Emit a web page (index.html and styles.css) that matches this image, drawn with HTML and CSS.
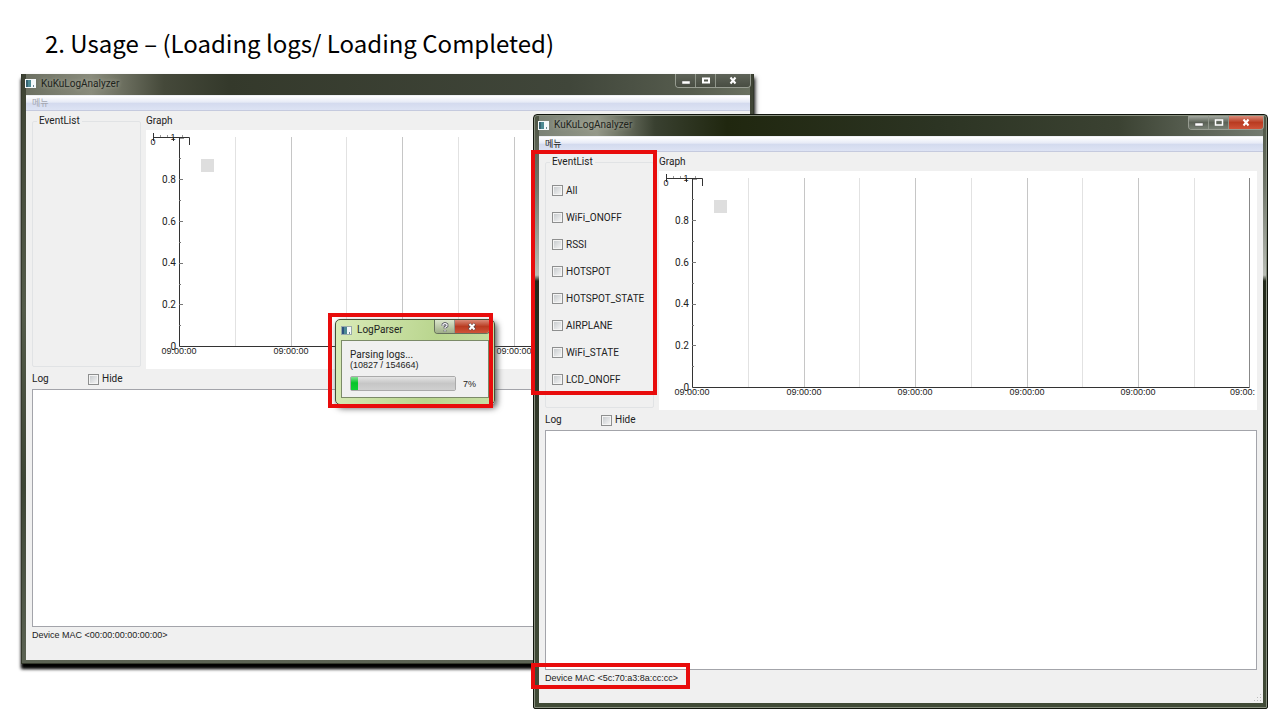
FILE: index.html
```html
<!DOCTYPE html>
<html lang="en">
<head>
<meta charset="utf-8">
<title>KuKuLogAnalyzer usage</title>
<link rel="stylesheet" href="styles.css">
</head>
<body>
<main class="slide">
  <h1 class="slide-title">2. Usage – (Loading logs/ Loading Completed)</h1>

  <section class="window window-loading">
    <header class="titlebar">
      <svg class="app-icon" width="11" height="9" viewBox="0 0 11 9"><rect width="11" height="9" fill="#f4f8fa"/><rect x="1" y="1" width="5" height="7" fill="#4d8a93"/><rect x="1" y="1" width="2" height="7" fill="#376474"/><rect x="8" y="6" width="1" height="2" fill="#6d8794"/></svg>
      <span class="caption">KuKuLogAnalyzer</span>
      <div class="controls">
        <button class="control" aria-label="Minimize"><svg width="10" height="9"><rect x="1" y="5" width="8" height="3" fill="#fff" stroke="#555" stroke-width=".5"/></svg></button>
        <button class="control" aria-label="Maximize"><svg width="10" height="9"><rect x="2" y="2.5" width="6" height="4" fill="none" stroke="#fff" stroke-width="2"/></svg></button>
        <button class="control control-close" aria-label="Close"><svg width="10" height="9"><path d="M2.500 1.500L7.500 7.500M7.500 1.500L2.500 7.500" stroke="#fff" stroke-width="2"/></svg></button>
      </div>
    </header>
    <div class="client">
      <nav class="menubar"><button class="menu" disabled>메뉴</button></nav>
      <div class="panels">
        <fieldset class="events"><legend>EventList</legend></fieldset>
        <section class="graph">
          <h2 class="label">Graph</h2>
          <svg class="plot" width="100%" height="239">
            <path d="M89.500 7V217M200.500 7V217M312.500 7V217M423.500 7V217M535.500 7V217" stroke="#e2e2e2"/>
            <path d="M145.500 7V217M256.500 7V217M368.500 7V217M479.500 7V217" stroke="#c6c6c6"/>
            <path d="M590.500 7V217" stroke="#888"/>
            <rect x="55" y="29" width="13" height="13" fill="#dedede"/>
            <path d="M33.500 7V216.500H590" fill="none" stroke="#333"/>
            <path d="M33 49.500h4M33 91.500h4M33 133.500h4M33 174.500h4M33 28.500h2M33 70.500h2M33 112.500h2M33 154.500h2M33 195.500h2" stroke="#777"/>
            <path d="M7 7.500H43.500V15M7.500 3V11M33 8h5M27.500 7v4" fill="none" stroke="#333"/>
            <path d="M14.500 5v2M21.500 5v2M36.500 5v2" stroke="#999"/>
            <g class="ticks"><text x="7" y="15">0</text><text x="27" y="10">1</text></g>
            <g class="values"><text x="30" y="53">0.8</text><text x="30" y="95">0.6</text><text x="30" y="136">0.4</text><text x="30" y="178">0.2</text><text x="30" y="220">0</text></g>
            <g class="ticks"><text x="33" y="224">09:00:00</text><text x="145" y="224">09:00:00</text><text x="256" y="224">09:00:00</text><text x="368" y="224">09:00:00</text><text x="479" y="224">09:00:00</text></g>
            <text class="last-tick" x="571" y="224">09:00:</text>
          </svg>
        </section>
      </div>
      <div class="log-head"><label class="log-label" for="log-a">Log</label><label class="check"><input type="checkbox">Hide</label></div>
      <textarea class="log" id="log-a" readonly></textarea>
      <p class="device">Device MAC &lt;00:00:00:00:00:00&gt;</p>
    </div>
  </section>

  <section class="dialog">
    <header class="titlebar dialog-title">
      <svg class="app-icon" width="11" height="9" viewBox="0 0 11 9"><rect x=".5" y=".5" width="10" height="8" fill="#f4f8fa" stroke="#9aa"/><rect x="1" y="1" width="5" height="7" fill="#4d8a93"/><rect x="1" y="1" width="2" height="7" fill="#2c5280"/><rect x="8" y="6" width="1" height="2" fill="#6d8794"/></svg>
      <span class="caption">LogParser</span>
      <div class="controls">
        <button class="control control-help" aria-label="Help"><svg width="10" height="10"><path d="M3 4V2.500Q5 .8 7 2.500V4L5 5.500V6.500M5 8v1.500" fill="none" stroke="#445" stroke-width="2.600"/><path d="M3 4V2.500Q5 .8 7 2.500V4L5 5.500V6.500M5 8v1.500" fill="none" stroke="#fff" stroke-width="1.200"/></svg></button>
        <button class="control control-close" aria-label="Close"><svg width="10" height="9"><path d="M2 2L8 7.500M8 2L2 7.500" stroke="#644" stroke-width="3.500"/><path d="M2.500 2L7.500 7.500M7.500 2L2.500 7.500" stroke="#fff" stroke-width="2"/></svg></button>
      </div>
    </header>
    <div class="dialog-body">
      <label for="progress">Parsing logs...<br><span class="count">(10827 / 154664)</span></label>
      <div class="progress-row"><progress id="progress" value="7" max="100"></progress><span class="count">7%</span></div>
    </div>
  </section>
  <div class="mark mark-dialog"></div>

  <section class="window window-done">
    <header class="titlebar">
      <svg class="app-icon" width="11" height="9" viewBox="0 0 11 9"><rect width="11" height="9" fill="#f4f8fa"/><rect x="1" y="1" width="5" height="7" fill="#4d8a93"/><rect x="1" y="1" width="2" height="7" fill="#376474"/><rect x="8" y="6" width="1" height="2" fill="#6d8794"/></svg>
      <span class="caption">KuKuLogAnalyzer</span>
      <div class="controls">
        <button class="control" aria-label="Minimize"><svg width="10" height="9"><rect x="1" y="5" width="8" height="3" fill="#fff" stroke="#555" stroke-width=".5"/></svg></button>
        <button class="control" aria-label="Maximize"><svg width="10" height="9"><rect x="1.500" y="2" width="7" height="5" fill="none" stroke="#fff" stroke-width="1.500"/></svg></button>
        <button class="control control-close" aria-label="Close"><svg width="10" height="9"><path d="M2.500 1.500L7.500 7.500M7.500 1.500L2.500 7.500" stroke="#fff" stroke-width="2"/></svg></button>
      </div>
    </header>
    <div class="client">
      <nav class="menubar"><button class="menu">메뉴</button></nav>
      <div class="panels">
        <fieldset class="events">
          <legend>EventList</legend>
          <label class="check"><input type="checkbox">All</label>
          <label class="check"><input type="checkbox">WiFi_ONOFF</label>
          <label class="check"><input type="checkbox">RSSI</label>
          <label class="check"><input type="checkbox">HOTSPOT</label>
          <label class="check"><input type="checkbox">HOTSPOT_STATE</label>
          <label class="check"><input type="checkbox">AIRPLANE</label>
          <label class="check"><input type="checkbox">WiFi_STATE</label>
          <label class="check"><input type="checkbox">LCD_ONOFF</label>
        </fieldset>
        <section class="graph">
          <h2 class="label">Graph</h2>
          <svg class="plot" width="100%" height="239">
            <path d="M89.500 7V217M200.500 7V217M312.500 7V217M423.500 7V217M535.500 7V217" stroke="#e2e2e2"/>
            <path d="M145.500 7V217M256.500 7V217M368.500 7V217M479.500 7V217" stroke="#c6c6c6"/>
            <path d="M590.500 7V217" stroke="#888"/>
            <rect x="55" y="29" width="13" height="13" fill="#dedede"/>
            <path d="M33.500 7V216.500H590" fill="none" stroke="#333"/>
            <path d="M33 49.500h4M33 91.500h4M33 133.500h4M33 174.500h4M33 28.500h2M33 70.500h2M33 112.500h2M33 154.500h2M33 195.500h2" stroke="#777"/>
            <path d="M7 7.500H43.500V15M7.500 3V11M33 8h5M27.500 7v4" fill="none" stroke="#333"/>
            <path d="M14.500 5v2M21.500 5v2M36.500 5v2" stroke="#999"/>
            <g class="ticks"><text x="7" y="15">0</text><text x="27" y="10">1</text></g>
            <g class="values"><text x="30" y="53">0.8</text><text x="30" y="95">0.6</text><text x="30" y="136">0.4</text><text x="30" y="178">0.2</text><text x="30" y="220">0</text></g>
            <g class="ticks"><text x="33" y="224">09:00:00</text><text x="145" y="224">09:00:00</text><text x="256" y="224">09:00:00</text><text x="368" y="224">09:00:00</text><text x="479" y="224">09:00:00</text></g>
            <text class="last-tick" x="571" y="224">09:00:</text>
          </svg>
        </section>
      </div>
      <div class="log-head"><label class="log-label" for="log-b">Log</label><label class="check"><input type="checkbox">Hide</label></div>
      <textarea class="log" id="log-b" readonly></textarea>
      <p class="device">Device MAC &lt;5c:70:a3:8a:cc:cc&gt;</p>
      <svg class="grip" width="8" height="8" fill="#bbb"><path d="M6 0h1v1H6zM6 3h1v1H6zM6 6h1v1H6zM3 3h1v1H3zM3 6h1v1H3zM0 6h1v1H0z"/></svg>
    </div>
  </section>
  <div class="mark mark-events"></div>
  <div class="mark mark-mac"></div>
</main>
</body>
</html>
```
FILE: styles.css
```css
* { box-sizing: border-box; }
body {
  margin: 0;
  background: #fff;
  color: #222;
  font: 10px/12px Roboto, "Liberation Sans", "Noto Sans CJK KR", sans-serif;
}
.slide { position: relative; min-height: 100vh; overflow: hidden; }
.slide-title {
  margin: 0;
  padding: 26px 45px 0;
  color: #000;
  font: 400 24px/34px "Noto Sans CJK KR", "Noto Sans", sans-serif;
}

.window {
  position: absolute;
  display: flex;
  flex-direction: column;
  border: 1px solid #33382b;
  color: #222;
}
.window-loading {
  left: 21px;
  top: 74px;
  width: 733px;
  height: 590px;
  padding: 0 3px 3px 4px;
  border-top: 0;
  background: linear-gradient(#3d4233, #545b4a 40%, #3d4535 70%, #5b6253);
  box-shadow: 0 5px 3px #000, 2px 3px 4px #777;
}
.window-done {
  left: 533px;
  top: 114px;
  width: 735px;
  height: 595px;
  padding: 0 4px 5px 5px;
  border-color: #10140c;
  border-radius: 4px 4px 2px 2px;
  background: linear-gradient(#4c5342, #70766a 12%, #b9bdb5 27%, #22291a 28%, #384030 60%, #414b37);
  box-shadow: inset 0 0 0 1px #899080;
}
.titlebar {
  display: flex;
  flex: none;
  align-items: center;
  gap: 5px;
  height: 20px;
}
.window .titlebar { padding-bottom: 2px; background: linear-gradient(90deg, #6c7062, #8a8c7c 9%, #45493a 19%, #34392b 28%, #40463a 75%, #565c4e 92%, #697060); }
.window-loading .titlebar { height: 21px; }
.window-done .titlebar { margin-top: 1px; height: 20px; background: linear-gradient(90deg, #7a8175, #949889 8%, #394030 16%, #20270f 26%, #2c3423 55%, #3b4232 80%, #747b70); }
.caption { color: #20231c; white-space: nowrap; }
.window .caption { text-shadow: 0 0 4px #b5b8a8; }
.app-icon { margin-left: -1px; }
.controls {
  display: flex;
  align-self: flex-start;
  margin: 0 -1px 0 auto;
  border: 1px solid #979c91;
  border-top: 0;
  border-radius: 0 0 4px 4px;
  overflow: hidden;
}
.control {
  display: grid;
  place-items: center;
  width: 20px;
  height: 13px;
  padding: 0;
  border: 0;
  border-right: 1px solid #8f958a;
  background: linear-gradient(#5f6459, #484d42);
}
.control-close { width: 34px; border-right: 0; }
.window-done .control { background: linear-gradient(#a3a8a0, #5c6357 50%, #777f73); }
.window-done .control-close, .dialog .control-close { background: linear-gradient(#d98a78, #b93b21 50%, #cf5339); }

.client {
  position: relative;
  display: flex;
  flex: 1;
  flex-direction: column;
  min-height: 0;
  border-top: 1px solid #eef0f4;
  background: #f0f0f0;
}
.menubar {
  flex: none;
  height: 15px;
  border-bottom: 1px solid #c5cade;
  background: linear-gradient(#fff, #e6eaf6 45%, #d3daee 50%, #dde3f4);
}
.menu {
  display: block;
  padding: 0 6px;
  border: 0;
  background: none;
  color: #222;
  font: 9px/14px "Noto Sans CJK KR", sans-serif;
}
.menu:disabled { color: #a3a6b0; }
.panels { display: flex; gap: 5px; padding: 4px 6px 0; }
.events {
  display: flex;
  flex-direction: column;
  width: 109px;
  margin: 0 0 2px;
  padding: 9px 0 0 6px;
  border: 1px solid #e1e3e5;
  border-radius: 2px;
}
.events legend { margin-left: -2px; padding: 0 2px; }
.events .check { height: 27px; }
.graph { flex: 1; min-width: 0; }
.label { margin: 0 0 3px; font: inherit; }
.plot { display: block; background: #fff; }
.plot text { fill: #222; }
.ticks, .last-tick, .count, .device { font-size: 9px; font-family: "Liberation Sans", sans-serif; }
.ticks { text-anchor: middle; }
.values { text-anchor: end; }
.check { display: flex; align-items: center; gap: 3px; white-space: nowrap; }
.check input {
  appearance: none;
  flex: none;
  width: 11px;
  height: 11px;
  margin: 0;
  border: 1px solid #8e8f8f;
  background: linear-gradient(135deg, #c3c7ca, #f8f8f8);
  box-shadow: inset 0 0 0 1px #f4f4f4;
}
.log-head { display: flex; flex: none; align-items: center; height: 20px; padding: 0 6px; }
.log-label { width: 56px; }
.log {
  flex: 1;
  min-height: 0;
  margin: 0 6px;
  border: 1px solid #a3a4aa;
  background: #fff;
  resize: none;
}
.device { flex: none; height: 33px; margin: 0; padding: 2px 6px; }
.grip { position: absolute; right: 1px; bottom: 1px; }

.dialog {
  position: absolute;
  left: 335px;
  top: 319px;
  width: 160px;
  height: 86px;
  padding: 0 5px 6px;
  display: flex;
  flex-direction: column;
  border: 1px solid #444e38;
  border-radius: 5px;
  background: linear-gradient(100deg, #d9ebb8, #b9d58e 60%, #c8dfa5);
  box-shadow: 2px 3px 6px #555;
}
.dialog .app-icon { margin-left: 0; }
.dialog-title .controls { border-color: #66705c; }
.dialog .control-help { background: linear-gradient(#dbe6cb, #9fae89); }
.dialog-body {
  flex: 1;
  padding: 9px 8px 0;
  border: 1px solid #7b8a68;
  background: #f0f0f0;
  line-height: 10px;
}
.progress-row { display: flex; align-items: center; gap: 7px; margin-top: 6px; }
progress {
  appearance: none;
  width: 106px;
  height: 15px;
  border: 1px solid #aaa;
  border-radius: 2px;
}
progress::-webkit-progress-bar { background: linear-gradient(#e4e4e4, #c6c6c6 50%, #d0d0d0); }
progress::-webkit-progress-value { background: linear-gradient(#7fe08f, #06c52a 45%, #12cf37); }

.mark { position: absolute; border: 4px solid #e80c0c; pointer-events: none; }
.mark-dialog { left: 328px; top: 313px; width: 165px; height: 95px; }
.mark-events { left: 531px; top: 150px; width: 126px; height: 245px; }
.mark-mac { left: 531px; top: 663px; width: 159px; height: 26px; }
```
